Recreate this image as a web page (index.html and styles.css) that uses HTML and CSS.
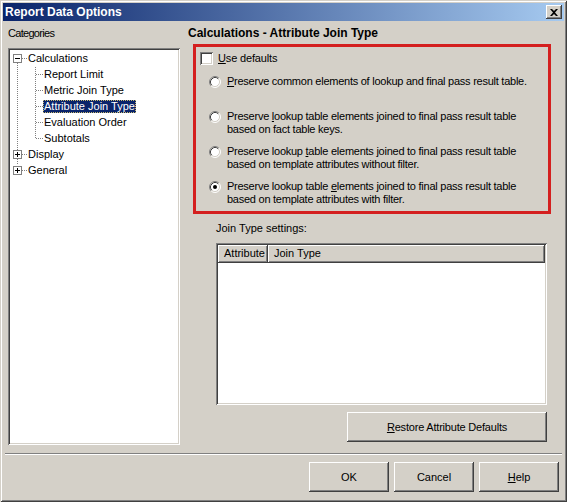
FILE: index.html
```html
<!DOCTYPE html>
<html lang="en">
<head>
<meta charset="utf-8">
<title>Report Data Options</title>
<link rel="stylesheet" href="styles.css">
</head>
<body>
<svg class="defs" width="0" height="0" aria-hidden="true">
  <symbol id="radio" viewBox="0 0 12 12">
    <circle cx="6" cy="6" r="5" fill="#fff"/>
    <path d="M2.11 9.89 A5.5 5.5 0 0 1 9.89 2.11" fill="none" stroke="#808080" stroke-width="1"/>
    <path d="M9.89 2.11 A5.5 5.5 0 0 1 2.11 9.89" fill="none" stroke="#ffffff" stroke-width="1"/>
    <path d="M2.82 9.18 A4.5 4.5 0 0 1 9.18 2.82" fill="none" stroke="#404040" stroke-width="1"/>
    <path d="M9.18 2.82 A4.5 4.5 0 0 1 2.82 9.18" fill="none" stroke="#d4d0c8" stroke-width="1"/>
  </symbol>
</svg>

<div class="window">
  <div class="titlebar">
    <span class="title">Report Data Options</span>
    <span class="close-btn">
      <svg width="8" height="7" viewBox="0 0 8 7"><path d="M0 0h2l2 2 2-2h2L5 3.5 8 7H6L4 5 2 7H0l3-3.5z" fill="#000"/></svg>
    </span>
  </div>

  <div class="main">
    <div class="cats">
      <div class="label">Categories</div>
      <div class="tree sunken">
        <svg class="tree-lines" width="172" height="140" viewBox="0 0 172 140">
          <g stroke="#808080" stroke-width="1" stroke-dasharray="1 1" fill="none">
            <path d="M9.5 15V117"/>
            <path d="M14 10.5H19M14 106.5H19M14 122.5H19"/>
            <path d="M27.5 19V91"/>
            <path d="M28 26.5H35M28 42.5H35M28 58.5H35M28 74.5H35M28 90.5H35"/>
          </g>
        </svg>
        <div class="node root"><span class="exp minus"></span><span class="txt">Calculations</span></div>
        <div class="node child"><span class="txt">Report Limit</span></div>
        <div class="node child"><span class="txt">Metric Join Type</span></div>
        <div class="node child"><span class="txt selected">Attribute Join Type</span></div>
        <div class="node child"><span class="txt">Evaluation Order</span></div>
        <div class="node child"><span class="txt">Subtotals</span></div>
        <div class="node root"><span class="exp plus"></span><span class="txt">Display</span></div>
        <div class="node root"><span class="exp plus"></span><span class="txt">General</span></div>
      </div>
    </div>

    <div class="panel">
      <div class="heading">Calculations - Attribute Join Type</div>
      <div class="marked">
        <div class="check-row"><span class="checkbox"></span><span><u>U</u>se defaults</span></div>
        <div class="options">
          <div class="option"><svg class="radio"><use href="#radio"/></svg><span><u>P</u>reserve common elements of lookup and final pass result table.</span></div>
          <div class="option"><svg class="radio"><use href="#radio"/></svg><span>Preserve <u>l</u>ookup table elements joined to final pass result table<br>based on fact table keys.</span></div>
          <div class="option"><svg class="radio"><use href="#radio"/></svg><span>Preserve lookup <u>t</u>able elements joined to final pass result table<br>based on template attributes without filter.</span></div>
          <div class="option"><svg class="radio"><use href="#radio"/><circle cx="6" cy="6" r="2" fill="#000"/></svg><span>Preserve lookup table <u>e</u>lements joined to final pass result table<br>based on template attributes with filter.</span></div>
        </div>
      </div>

      <div class="settings">
        <div class="settings-label">Join Type settings:</div>
        <div class="listview sunken">
          <div class="lv-header">
            <div class="col col-attr">Attribute</div>
            <div class="col col-type">Join Type</div>
          </div>
        </div>
        <div class="restore-row"><button class="btn btn-wide"><u>R</u>estore Attribute Defaults</button></div>
      </div>
    </div>
  </div>

  <div class="separator"></div>

  <div class="footer">
    <button class="btn">OK</button>
    <button class="btn">Cancel</button>
    <button class="btn"><u>H</u>elp</button>
  </div>
</div>
</body>
</html>
```

FILE: styles.css
```css
* { box-sizing: border-box; }

html, body {
  margin: 0;
  padding: 0;
  background: #d4d0c8;
}

.defs { position: absolute; width: 0; height: 0; }

.window {
  width: 567px;
  height: 502px;
  padding: 3px;
  background: #d4d0c8;
  font-family: "Liberation Sans", Arial, sans-serif;
  font-size: 11px;
  line-height: 13px;
  color: #000;
  box-shadow:
    inset 1px 1px #d4d0c8,
    inset -1px -1px #404040,
    inset 2px 2px #ffffff,
    inset -2px -2px #808080;
}

/* title bar */
.titlebar {
  height: 18px;
  display: flex;
  align-items: center;
  justify-content: space-between;
  padding: 0 2px 0 2px;
  background: linear-gradient(to right, #0a246a, #a6caf0);
}

.title {
  color: #fff;
  font-weight: bold;
  font-size: 12px;
  line-height: 18px;
}

.close-btn {
  width: 16px;
  height: 14px;
  display: flex;
  align-items: center;
  justify-content: center;
  background: #d4d0c8;
  box-shadow:
    inset -1px -1px #404040,
    inset 1px 1px #ffffff,
    inset -2px -2px #808080;
}

/* common 3D edges */
.sunken {
  background: #fff;
  box-shadow:
    inset 1px 1px #808080,
    inset -1px -1px #ffffff,
    inset 2px 2px #404040,
    inset -2px -2px #d4d0c8;
}

.btn {
  font: inherit;
  color: #000;
  background: #d4d0c8;
  border: 0;
  padding: 0;
  width: 80px;
  height: 30px;
  box-shadow:
    inset -1px -1px #404040,
    inset 1px 1px #ffffff,
    inset -2px -2px #808080,
    inset 2px 2px #d4d0c8;
}

.btn-wide {
  width: 200px;
  letter-spacing: -0.2px;
}

/* body */
.main {
  display: flex;
  padding-left: 5px;
}

.cats {
  width: 172px;
  padding-top: 6px;
}

.label {
  height: 13px;
  letter-spacing: -0.7px;
}

.tree {
  position: relative;
  margin-top: 8px;
  height: 397px;
  padding-top: 2px;
  padding-left: 2px;
}

.tree-lines {
  position: absolute;
  left: 0;
  top: 0;
}

.node {
  position: relative;
  height: 16px;
  display: flex;
  align-items: center;
}

.node.root { padding-left: 3px; }
.node.child { padding-left: 33px; }

.exp {
  width: 9px;
  height: 9px;
  border: 1px solid #808080;
  background: #fff;
  position: relative;
  margin-right: 5px;
}

.exp::before {
  content: "";
  position: absolute;
  left: 1px;
  top: 3px;
  width: 5px;
  height: 1px;
  background: #000;
}

.exp.plus::after {
  content: "";
  position: absolute;
  left: 3px;
  top: 1px;
  width: 1px;
  height: 5px;
  background: #000;
}

.txt {
  padding: 0 1px;
  line-height: 13px;
  background: #fff;
  position: relative;
}

.node.root .txt { background: transparent; }

.txt.selected {
  background: #0a246a;
  color: #fff;
  outline: 1px dotted #c8b870;
  outline-offset: -1px;
}

.panel {
  margin-left: 8px;
  padding-top: 6px;
  flex: 1;
}

.heading {
  font-weight: bold;
  font-size: 12px;
  height: 13px;
}

.marked {
  margin-top: 4px;
  margin-left: 5px;
  width: 358px;
  height: 170px;
  border: 3px solid #d41f1f;
  padding: 5px 0 0 4px;
}

.check-row {
  display: flex;
  align-items: center;
  gap: 5px;
  height: 13px;
  letter-spacing: -0.15px;
}

.checkbox {
  width: 13px;
  height: 13px;
  background: #fff;
  box-shadow:
    inset 1px 1px #808080,
    inset -1px -1px #ffffff,
    inset 2px 2px #404040,
    inset -2px -2px #d4d0c8;
}

.options {
  margin-top: 10px;
  padding-left: 9px;
  letter-spacing: -0.25px;
}

.option {
  display: flex;
  align-items: flex-start;
  gap: 6px;
  height: 35px;
}

.option:last-child { height: 34px; }

.radio {
  width: 12px;
  height: 12px;
  margin-top: 1px;
  flex: none;
}

.settings {
  margin-left: 28px;
  margin-top: 8px;
  width: 331px;
}

.settings-label { height: 13px; }

.listview {
  margin-top: 8px;
  height: 162px;
  padding: 2px;
}

.lv-header {
  display: flex;
  height: 18px;
}

.col {
  height: 18px;
  line-height: 17px;
  padding-left: 6px;
  background: #d4d0c8;
  box-shadow:
    inset -1px -1px #404040,
    inset 1px 1px #ffffff,
    inset -2px -2px #808080;
}

.col-attr { width: 50px; }
.col-type { flex: 1; }

.restore-row {
  display: flex;
  justify-content: flex-end;
  margin-top: 7px;
}

.separator {
  margin: 8px 2px 0 2px;
  height: 2px;
  border-top: 1px solid #808080;
  border-bottom: 1px solid #ffffff;
}

.footer {
  display: flex;
  justify-content: flex-end;
  gap: 5px;
  margin-top: 7px;
  padding-right: 5px;
}
```
